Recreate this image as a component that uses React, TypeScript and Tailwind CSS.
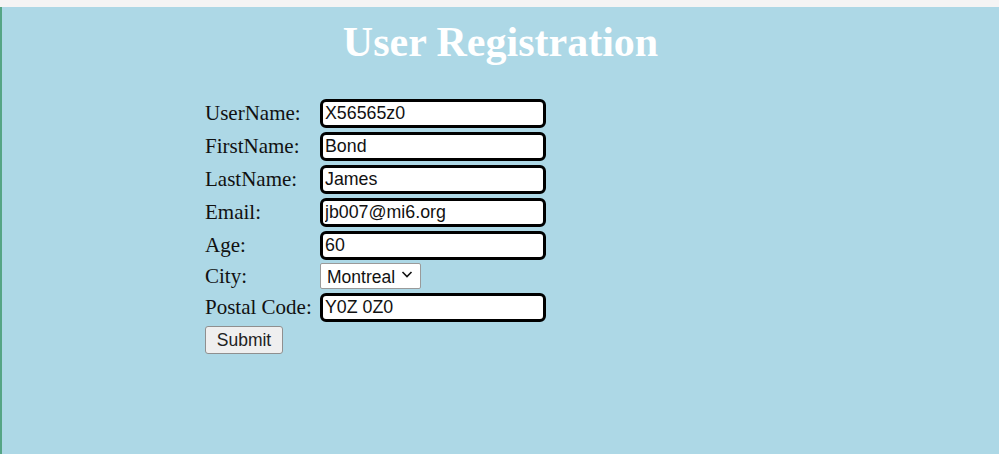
import React, { useState } from "react"

const fields = [
  { label: "UserName:", value: "X56565z0" },
  { label: "FirstName:", value: "Bond" },
  { label: "LastName:", value: "James" },
  { label: "Email:", value: "jb007@mi6.org" },
  { label: "Age:", value: "60" },
]

export default function App() {
  const [values, setValues] = useState<string[]>(fields.map((f) => f.value))
  const [city, setCity] = useState("Montreal")
  const [postal, setPostal] = useState("Y0Z 0Z0")

  const inputCls =
    "w-[226px] h-[29px] border-[3px] border-black rounded-[6px] bg-white pl-[2px] text-[17.8px] text-[#111] outline-none font-['Liberation_Sans',Arial,sans-serif]"

  return (
    <div className="w-full h-[454px] flex flex-col overflow-hidden">
      <div className="h-[7px] bg-[#f4f4f4] shrink-0" />
      <div className="flex-1 bg-[#add8e6] border-l-2 border-[#55a585] font-['Liberation_Serif','Times_New_Roman',serif]">
        {/* heading */}
        <h1 className="pt-[11px] text-center text-[42px] leading-[48px] font-bold text-white">
          User Registration
        </h1>

        {/* form */}
        <form
          onSubmit={(e) => e.preventDefault()}
          className="ml-[203px] mt-[31px] text-[21px] text-[#111]"
        >
          {fields.map((f, i) => (
            <div key={f.label} className="flex items-center h-[33px]">
              <label className="w-[115px]">{f.label}</label>
              <input
                type="text"
                value={values[i]}
                onChange={(e) => setValues(values.map((v, j) => (j === i ? e.target.value : v)))}
                className={inputCls}
              />
            </div>
          ))}

          <div className="flex items-center h-[29px]">
            <label className="w-[115px]">City:</label>
            <div className="relative">
              <select
                value={city}
                onChange={(e) => setCity(e.target.value)}
                className="appearance-none w-[101px] h-[26px] border border-[#9a9a9a] rounded-[2px] bg-white pl-[6px] pr-[22px] text-[17.5px] text-[#111] outline-none font-['Liberation_Sans',Arial,sans-serif]"
              >
                <option>Montreal</option>
                <option>Toronto</option>
                <option>Vancouver</option>
              </select>
              <svg
                className="absolute right-[8px] top-[9px] pointer-events-none"
                width="12"
                height="9"
                viewBox="0 0 12 9"
              >
                <path d="M1.5 2 L6 6.5 L10.5 2" fill="none" stroke="#111" strokeWidth="1.6" />
              </svg>
            </div>
          </div>

          <div className="flex items-center h-[33px]">
            <label className="w-[115px]">Postal Code:</label>
            <input
              type="text"
              value={postal}
              onChange={(e) => setPostal(e.target.value)}
              className={inputCls}
            />
          </div>

          <button
            type="submit"
            className="mt-[1px] h-[28px] w-[78px] bg-[#efefef] border border-[#8f8f8f] rounded-[3px] text-[17.5px] text-[#222] font-['Liberation_Sans',Arial,sans-serif]"
          >
            Submit
          </button>
        </form>
      </div>
    </div>
  )
}
